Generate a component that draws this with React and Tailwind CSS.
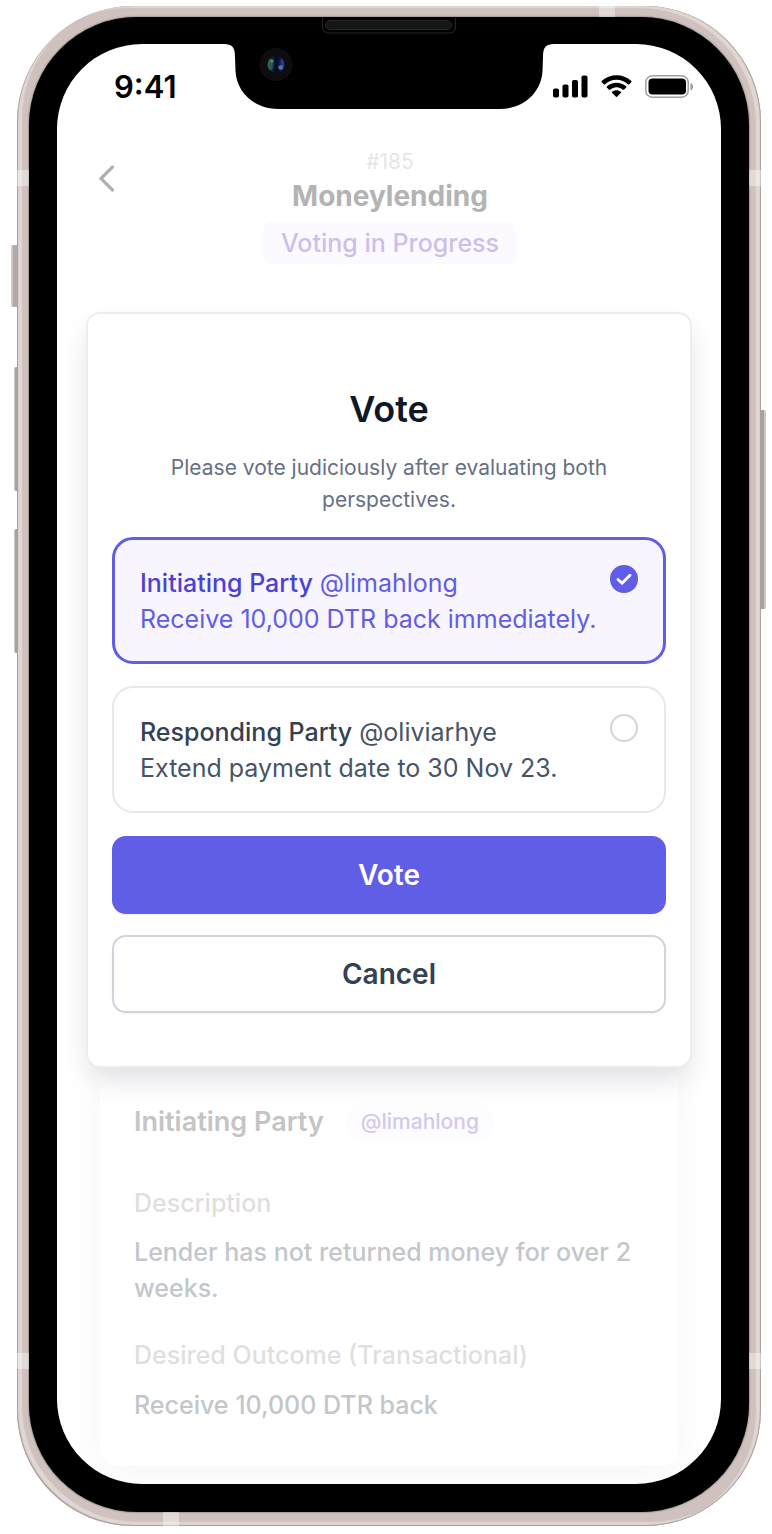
import { useState } from "react";

function Notch() {
  return (
    <svg
      aria-hidden="true"
      className="absolute left-1/2 -top-[27px] -translate-x-1/2"
      width="330"
      height="94"
      viewBox="0 -27 330 94"
    >
      <defs>
        <linearGradient id="lens" x1="0" x2="1" y1="0" y2="0">
          <stop offset="0" stopColor="#33615a" />
          <stop offset="0.25" stopColor="#2c5558" />
          <stop offset="0.45" stopColor="#060b22" />
          <stop offset="0.65" stopColor="#0a1338" />
          <stop offset="0.9" stopColor="#2449a5" />
          <stop offset="1" stopColor="#16306f" />
        </linearGradient>
      </defs>
      <path
        d="M0 -1V0C8 0 11 3 11 13L11.500 27C12.500 48 30 65 54 65H276C300 65 317.500 48 318.500 27L319 13C319 3 322 0 330 0V-1Z"
        fill="#000"
      />
      <path d="M98.500 -26V-17Q98.500 -11 105 -11H225Q231.500 -11 231.500 -17V-26" fill="none" stroke="#262626" />
      <rect x="101.500" y="-23.500" width="126" height="9" rx="4.500" fill="#151515" stroke="#262626" />
      <circle cx="52" cy="20.500" r="16.500" fill="#0d0d0d" />
      <circle cx="52" cy="20.500" r="8.500" fill="url(#lens)" />
      <path d="M45 14C49 11 55 11 59 14L54 17H50Z" fill="#060b22" opacity="0.6" />
      <path d="M45 27C49 30 55 30 59 27L54 24H50Z" fill="#060b22" opacity="0.6" />
      <circle cx="48" cy="17" r="1.800" fill="#6f9a90" opacity="0.7" />
      <circle cx="56.500" cy="23.500" r="2.200" fill="#7a78c4" opacity="0.8" />
    </svg>
  );
}

function SignalIcon() {
  return (
    <svg aria-hidden="true" width="35" height="23" viewBox="0 0 35 23">
      <rect x="0" y="13.500" width="6" height="9" rx="1.800" />
      <rect x="9.500" y="9.500" width="6" height="13" rx="1.800" />
      <rect x="19" y="5" width="6" height="17.500" rx="1.800" />
      <rect x="28.500" y="0.500" width="6" height="22" rx="1.800" />
    </svg>
  );
}

function WifiIcon() {
  return (
    <svg aria-hidden="true" width="31" height="23" viewBox="0 0 31 23">
      <path d="M15.500 4.700C19.900 4.700 24 6.400 27.200 9.400C27.500 9.600 27.900 9.600 28.100 9.400L30.400 7.100C30.700 6.800 30.700 6.400 30.400 6.100C22.100 -1.700 8.900 -1.700 0.600 6.100C0.300 6.400 0.300 6.800 0.600 7.100L2.900 9.400C3.100 9.600 3.500 9.600 3.800 9.400C7 6.400 11.100 4.700 15.500 4.700Z" />
      <path d="M15.500 12.200C17.900 12.200 20.200 13.100 22 14.700C22.300 14.900 22.600 14.900 22.900 14.700L25.200 12.400C25.500 12.100 25.500 11.700 25.200 11.400C19.700 6.400 11.300 6.400 5.800 11.400C5.500 11.700 5.500 12.100 5.800 12.400L8.100 14.700C8.400 14.900 8.700 14.900 9 14.700C10.800 13.100 13.100 12.200 15.500 12.200Z" />
      <path d="M20 17.700C20.300 17.400 20.300 16.900 20 16.700C17.400 14.600 13.600 14.600 11 16.700C10.700 16.900 10.700 17.400 11 17.700L15 21.700C15.300 22 15.700 22 16 21.700Z" />
    </svg>
  );
}

function BatteryIcon() {
  return (
    <svg aria-hidden="true" width="49" height="23" viewBox="0 0 49 23">
      <rect x="0.800" y="0.800" width="42.400" height="21.400" rx="6.500" fill="none" stroke="#000" strokeOpacity="0.38" strokeWidth="1.500" />
      <rect x="3.500" y="3.500" width="37.500" height="16" rx="4" />
      <path d="M45.500 8V15.500C47 14.900 48 13.400 48 11.750C48 10.100 47 8.600 45.500 8Z" fillOpacity="0.42" />
    </svg>
  );
}

function StatusBar() {
  return (
    <div className="flex h-[65px] items-center justify-between pt-5 pr-[27px] pl-[57px]">
      <time className="text-[31px] leading-9 font-semibold">9:41</time>
      <div className="flex items-center gap-[13px]">
        <SignalIcon />
        <WifiIcon />
        <BatteryIcon />
      </div>
    </div>
  );
}

const options = [
  { id: "initiating", role: "Initiating Party", handle: "@limahlong", outcome: "Receive 10,000 DTR back immediately." },
  { id: "responding", role: "Responding Party", handle: "@oliviarhye", outcome: "Extend payment date to 30 Nov 23." },
];

function VoteOption({ option, checked, onSelect }) {
  return (
    <label
      className={
        checked
          ? "flex cursor-pointer items-start justify-between rounded-[21px] border-3 border-[#605de6] bg-[#f8f5ff] px-[25px] pt-[25px] pb-6 text-[#605de6]"
          : "flex cursor-pointer items-start justify-between rounded-[21px] border-2 border-[#e6e8ec] bg-white px-[26px] pt-[26px] pb-[25px] text-[#475467]"
      }
    >
      <span className="text-[25px] leading-9">
        <span className={checked ? "font-medium text-[#4a42d2]" : "font-medium text-[#344054]"}>{option.role}</span>{" "}
        {option.handle}
        <span className="block whitespace-nowrap">{option.outcome}</span>
      </span>
      <span className="-ml-6 grid shrink-0">
        <input
          type="radio"
          name="vote"
          value={option.id}
          checked={checked}
          onChange={() => onSelect(option.id)}
          className="col-start-1 row-start-1 size-7 appearance-none rounded-full border-2 border-[#d0d5dd] bg-white checked:border-[#605de6] checked:bg-[#605de6]"
        />
        {checked && (
          <svg aria-hidden="true" className="pointer-events-none col-start-1 row-start-1" width="28" height="28" viewBox="0 0 28 28">
            <path d="M8 14.500L12 18.300L20 10.200" fill="none" stroke="#fff" strokeWidth="2.900" strokeLinecap="round" strokeLinejoin="round" />
          </svg>
        )}
      </span>
    </label>
  );
}

function VoteDialog() {
  const [choice, setChoice] = useState("initiating");
  return (
    <form
      role="dialog"
      aria-labelledby="vote-title"
      onSubmit={(event) => event.preventDefault()}
      className="relative z-10 mx-[29px] mt-12 rounded-[14px] border-2 border-[#ecedf1] bg-white px-6 pt-[73px] pb-[53px] shadow-[0_14px_28px_-4px_rgba(16,24,40,0.14)]"
    >
      <h2 id="vote-title" className="text-center text-[36px] leading-[44px] font-semibold text-[#101828]">
        Vote
      </h2>
      <p className="mx-auto mt-[21px] max-w-[470px] text-center text-[21px] leading-8 text-[#667085]">
        Please vote judiciously after evaluating both perspectives.
      </p>
      <div className="mt-[21px] flex flex-col gap-[22px]">
        {options.map((option) => (
          <VoteOption key={option.id} option={option} checked={choice === option.id} onSelect={setChoice} />
        ))}
      </div>
      <div className="mt-[23px] flex flex-col gap-[21px]">
        <button type="submit" className="h-[78px] rounded-[14px] bg-[#605de6] text-[28px] font-semibold text-white shadow-xs">
          Vote
        </button>
        <button type="button" className="h-[78px] rounded-[14px] border-2 border-[#d0d5dd] bg-white text-[28px] font-semibold text-[#344054] shadow-xs">
          Cancel
        </button>
      </div>
    </form>
  );
}

function DisputeHeader() {
  return (
    <header className="grid grid-cols-[20px_1fr_20px] pt-[37px] pr-[38px] pl-10">
      <button type="button" aria-label="Back" className="mt-4 size-8">
        <svg aria-hidden="true" width="20" height="32" viewBox="0 0 20 32">
          <path d="M15.500 5L4 16.500L15.500 28" fill="none" stroke="#b0b0b0" strokeWidth="3.200" strokeLinecap="round" strokeLinejoin="miter" />
        </svg>
      </button>
      <div className="flex flex-col items-center">
        <p className="text-[21px] leading-8 text-[#e6e6e6]">#185</p>
        <h1 className="text-[28px] leading-9 font-bold text-[#b3b3b3]">Moneylending</h1>
        <p className="mt-2 rounded-lg bg-[#fcfaff] px-[18px] py-[3px] text-[25px] leading-9 font-medium text-[#cbbff0]">
          Voting in Progress
        </p>
      </div>
    </header>
  );
}

function PartyCard() {
  return (
    <section className="mx-[43px] mb-[18px] rounded-2xl bg-white px-[34px] pt-[35px] pb-[43px] shadow-[0_8px_36px_rgba(0,0,0,0.04)]">
      <div className="flex items-center gap-[22px]">
        <h2 className="text-[27px] leading-[38px] font-semibold text-[#c5c5c5]">Initiating Party</h2>
        <span className="rounded-full bg-[#fdfcff] px-[15px] py-[3px] text-[21px] leading-8 font-medium text-[#d3c8ef]">@limahlong</span>
      </div>
      <dl className="text-[25px] leading-9 font-medium">
        <dt className="mt-11 text-[#dfdfdf]">Description</dt>
        <dd className="mt-[13px] text-[#c3c6cb]">Lender has not returned money for over 2 weeks.</dd>
        <dt className="mt-[31px] text-[#dfdfdf]">Desired Outcome (Transactional)</dt>
        <dd className="mt-[14px] text-[#c3c6cb]">Receive 10,000 DTR back</dd>
      </dl>
    </section>
  );
}

function FrameDetails() {
  return (
    <div aria-hidden="true">
      <span className="absolute top-[239px] -left-[6px] h-[62px] w-[6px] rounded-l-xs border-l-2 border-[#cdc8c6] bg-[#b3a8a5]" />
      <span className="absolute top-[361px] -left-[3px] h-[124px] w-[3px] rounded-l-xs border-l border-[#cdc8c6] bg-[#aaa09d]" />
      <span className="absolute top-[523px] -left-[3px] h-[124px] w-[3px] rounded-l-xs border-l border-[#cdc8c6] bg-[#aaa09d]" />
      <span className="absolute top-[404px] -right-[5px] h-[199px] w-[5px] rounded-r-xs border-r-2 border-[#cdc8c6] bg-[#aaa09d]" />
      <span className="absolute top-[164px] left-0 h-4 w-3 bg-white/40" />
      <span className="absolute top-[164px] right-0 h-4 w-3 bg-white/40" />
      <span className="absolute bottom-[157px] left-0 h-4 w-3 bg-white/40" />
      <span className="absolute right-0 bottom-[157px] h-4 w-3 bg-white/40" />
      <span className="absolute top-0 right-[146px] h-[11px] w-4 bg-white/40" />
      <span className="absolute bottom-0 left-[146px] h-[14px] w-4 bg-white/40" />
    </div>
  );
}

export default function App() {
  return (
    <div className="bg-white pt-[6px] pr-[11px] pb-2 pl-[17px] font-[Inter,sans-serif] text-black">
      <div className="relative rounded-[116px] bg-[#cfc1be] px-3 pt-[11px] pb-[14px] shadow-[inset_1px_-1px_1px_#a89d9a,inset_-1px_0_1px_#a89d9a,inset_5px_-4px_1px_#e0d7d5,inset_-5px_2px_1px_#e0d7d5]">
        <FrameDetails />
        <div className="rounded-[108px] bg-black px-7 pt-[27px] pb-7 shadow-[0_0_2px_#444]">
          <div className="relative">
            <main className="overflow-hidden rounded-[85px] bg-white">
              <StatusBar />
              <DisputeHeader />
              <VoteDialog />
              <PartyCard />
            </main>
            <Notch />
          </div>
        </div>
      </div>
    </div>
  );
}
